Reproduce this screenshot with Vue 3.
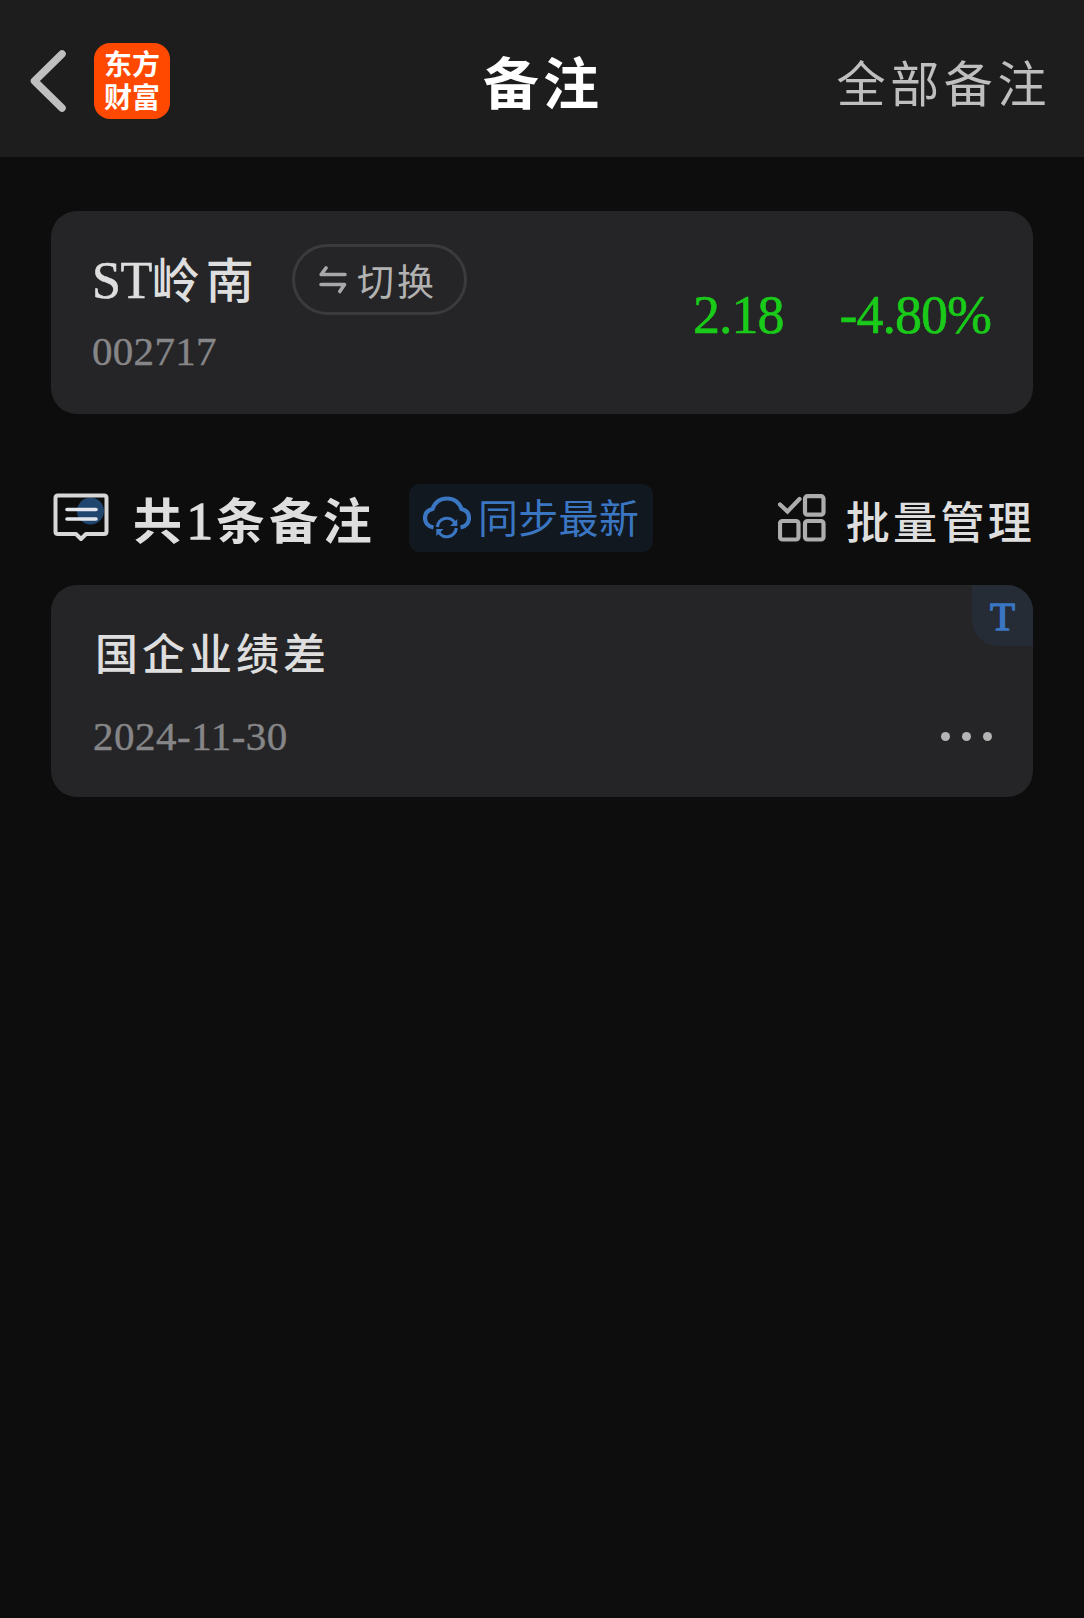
<script setup>
import { ref, computed } from 'vue'

const stock = ref({
  prefix: 'ST',
  name: '岭南',
  code: '002717',
  price: '2.18',
  change: '-4.80%',
})

const notes = ref([{ id: 1, content: '国企业绩差', date: '2024-11-30', type: 'T' }])

const isDown = computed(() => stock.value.change.startsWith('-'))
</script>

<template>
  <div class="page">
    <header class="header">
      <div class="header-left">
        <svg class="back-icon" width="38" height="64" viewBox="0 0 38 64">
          <path d="M33 5 L5.500 32 L33 59" />
        </svg>
        <div class="logo">东方<br />财富</div>
      </div>
      <h1 class="title">备注</h1>
      <a class="all-link">全部备注</a>
    </header>

    <main class="content">
      <section class="card stock-card">
        <div class="stock-info">
          <div class="stock-top">
            <div class="stock-name">
              <span class="stock-prefix">{{ stock.prefix }}</span
              ><span>{{ stock.name }}</span>
            </div>
            <button class="switch-btn">
              <svg width="28" height="28" viewBox="0 0 28 28">
                <path d="M7 2 L2.2 8.5 H26" />
                <path d="M2 18.5 H25.5 L20.8 25.5" />
              </svg>
              <span>切换</span>
            </button>
          </div>
          <div class="stock-code">{{ stock.code }}</div>
        </div>
        <div class="quote" :class="{ down: isDown }">
          <span class="price">{{ stock.price }}</span>
          <span class="change">{{ stock.change }}</span>
        </div>
      </section>

      <div class="toolbar">
        <svg class="note-icon" width="56" height="50" viewBox="0 0 56 50">
          <circle cx="37.5" cy="18" r="13.5" fill="#20456f" />
          <path
            d="M5 2.5 H51 Q53.5 2.5 53.5 5 V38.5 Q53.5 41 51 41 H33 L28 46 L23 41 H5 Q2.5 41 2.5 38.5 V5 Q2.5 2.5 5 2.5 Z"
            fill="none"
            stroke="#d8d8d8"
            stroke-width="4"
            stroke-linejoin="round"
          />
          <path d="M14 16.5 H43 M14 26 H43" stroke="#e2e6ec" stroke-width="3.6" stroke-linecap="round" />
        </svg>
        <h2 class="count">共<span class="num">{{ notes.length }}</span>条备注</h2>
        <button class="sync-btn">
          <svg width="48" height="44" viewBox="0 0 48 44">
            <path
              class="line"
              d="M10.5 31.5 C5 30.5 2 26.5 2 22 C2 17 5 14 9.5 13 C12 6 17 2.5 24 2.5 C31 2.5 36 6 38.5 13 C43 14 46 17 46 22 C46 26.5 43 30.5 37.5 31.5"
            />
            <path class="line thin" d="M14.3 31 A9.5 9.5 0 0 1 32 27" />
            <path class="line thin" d="M33.3 32 A9.5 9.500 0 0 1 15.6 36" />
            <path class="head" d="M34.3 23 V30 H27 Z" />
            <path class="head" d="M13.3 40 V33 H20.6 Z" />
          </svg>
          <span>同步最新</span>
        </button>
        <a class="manage">
          <svg width="48" height="48" viewBox="0 0 48 48">
            <path d="M2 10.5 L9.5 17.5 L21.5 5" stroke-linecap="round" />
            <rect x="27" y="2.2" width="18.5" height="18.5" rx="2.5" />
            <rect x="2" y="27" width="18.5" height="18.5" rx="2.5" />
            <rect x="27" y="27" width="18.5" height="18.5" rx="2.5" />
          </svg>
          <span>批量管理</span>
        </a>
      </div>

      <section v-for="note in notes" :key="note.id" class="card note-card">
        <span class="tag">{{ note.type }}</span>
        <div class="note-text">{{ note.content }}</div>
        <div class="note-bottom">
          <span class="note-date">{{ note.date }}</span>
          <span class="more"><i></i><i></i><i></i></span>
        </div>
      </section>
    </main>
  </div>
</template>

<style>
body {
  background: #0d0d0d;
}
</style>

<style scoped>
.page {
  min-height: 1618px;
  background: #0d0d0d;
  color: #dedede;
  font-family: 'Liberation Serif', 'Noto Sans CJK SC', serif;
}
.page * {
  box-sizing: border-box;
}
button {
  font-family: inherit;
  padding: 0;
  margin: 0;
}
.header {
  display: grid;
  grid-template-columns: 1fr auto 1fr;
  align-items: center;
  height: 157px;
  padding: 5px 33px 0 29px;
  background: #1d1d1d;
}
.header-left {
  display: flex;
  align-items: center;
  gap: 27px;
}
.back-icon path {
  fill: none;
  stroke: #bfbfbf;
  stroke-width: 7.5;
  stroke-linejoin: round;
  stroke-linecap: round;
}
.logo {
  width: 76px;
  height: 76px;
  padding-top: 4px;
  border-radius: 16px;
  background: #ff4800;
  color: #fff;
  font-family: 'Noto Sans CJK SC', sans-serif;
  font-size: 28px;
  font-weight: 700;
  line-height: 33px;
  text-align: center;
}
.title {
  margin: 8px 0 0 6px;
  color: #fff;
  font-size: 56px;
  font-weight: 700;
  line-height: 80px;
  letter-spacing: 4px;
}
.all-link {
  justify-self: end;
  margin-top: 9px;
  color: #bfbfbf;
  font-size: 49px;
  line-height: 80px;
  letter-spacing: 4.6px;
}
.content {
  padding: 54px 51px 0;
}
.card {
  border-radius: 26px;
  background: #252527;
}
.stock-card {
  display: flex;
  justify-content: space-between;
  align-items: center;
  height: 203px;
  padding: 0 42px 0 41px;
}
.stock-info {
  align-self: flex-start;
  padding-top: 32px;
}
.stock-top {
  display: flex;
  align-items: center;
}
.stock-name {
  width: 200px;
  padding-top: 4px;
  font-size: 48px;
  font-weight: 500;
  line-height: 68px;
  letter-spacing: 6px;
  white-space: nowrap;
}
.stock-prefix {
  font-size: 52px;
  letter-spacing: -0.5px;
  -webkit-text-stroke: 0.6px;
}
.switch-btn {
  display: flex;
  align-items: center;
  gap: 10px;
  width: 175px;
  height: 71px;
  padding-left: 24px;
  border: 3px solid #3b3b3d;
  border-radius: 36px;
  background: none;
  color: #b2b2b2;
  font-size: 37px;
  letter-spacing: 3px;
}
.switch-btn svg path {
  fill: none;
  stroke: #a8a8a8;
  stroke-width: 3.6;
  stroke-linejoin: round;
  stroke-linecap: round;
}
.stock-code {
  margin-top: 11px;
  color: #868688;
  font-size: 41px;
  line-height: 48px;
  letter-spacing: 0.3px;
  -webkit-text-stroke: 0.4px;
}
.quote {
  display: flex;
  align-items: center;
  gap: 56px;
  padding-top: 5px;
  color: #f33;
  font-size: 54px;
  letter-spacing: -1px;
  -webkit-text-stroke: 0.6px;
}
.quote.down {
  color: #1acb1a;
}
.toolbar {
  display: flex;
  align-items: center;
  height: 68px;
  margin-top: 70px;
  padding-left: 2px;
}
.note-icon {
  flex: none;
}
.count {
  width: 276px;
  margin: 0 0 0 24px;
  padding-top: 8px;
  font-size: 49px;
  font-weight: 700;
  line-height: 68px;
  letter-spacing: 4.4px;
  white-space: nowrap;
}
.num {
  font-size: 53px;
  font-weight: 400;
  letter-spacing: 3px;
  -webkit-text-stroke: 1.4px;
}
.sync-btn {
  display: flex;
  align-items: center;
  gap: 7px;
  width: 244px;
  height: 68px;
  padding-left: 14px;
  border: 0;
  border-radius: 11px;
  background: #111820;
  color: #3a76c2;
  font-family: 'Noto Sans CJK SC', sans-serif;
  font-size: 40px;
  line-height: 60px;
  letter-spacing: 0.3px;
  white-space: nowrap;
}
.sync-btn span {
  padding-bottom: 4px;
}
.sync-btn .line {
  fill: none;
  stroke: #3a76c2;
  stroke-width: 4.2;
}
.sync-btn .thin {
  stroke-width: 3.2;
}
.sync-btn .head {
  fill: #3a76c2;
}
.manage {
  display: flex;
  align-items: center;
  gap: 20px;
  margin-left: auto;
  margin-right: -2px;
  font-size: 44px;
  font-weight: 500;
  letter-spacing: 3.3px;
  white-space: nowrap;
}
.manage svg {
  fill: none;
  stroke: #adadad;
  stroke-width: 4.2;
}
.manage span {
  padding-top: 4px;
}
.note-card {
  position: relative;
  height: 212px;
  margin-top: 33px;
  padding: 39px 40px 0 42px;
  overflow: hidden;
}
.tag {
  position: absolute;
  top: 0;
  right: 0;
  width: 61px;
  height: 61px;
  border-bottom-left-radius: 26px;
  background: #252c36;
  color: #3a76c2;
  font-size: 41px;
  line-height: 62px;
  text-align: center;
  -webkit-text-stroke: 1.3px;
}
.note-text {
  padding-left: 2px;
  font-size: 43px;
  font-weight: 500;
  line-height: 64px;
  letter-spacing: 4px;
}
.note-bottom {
  display: flex;
  justify-content: space-between;
  align-items: center;
  margin-top: 23px;
}
.note-date {
  color: #868688;
  font-size: 41px;
  line-height: 50px;
  letter-spacing: 0.5px;
  -webkit-text-stroke: 0.4px;
}
.more {
  display: flex;
  gap: 12px;
  padding-right: 1px;
}
.more i {
  width: 9px;
  height: 9px;
  border-radius: 50%;
  background: #b4b4b4;
}
</style>
